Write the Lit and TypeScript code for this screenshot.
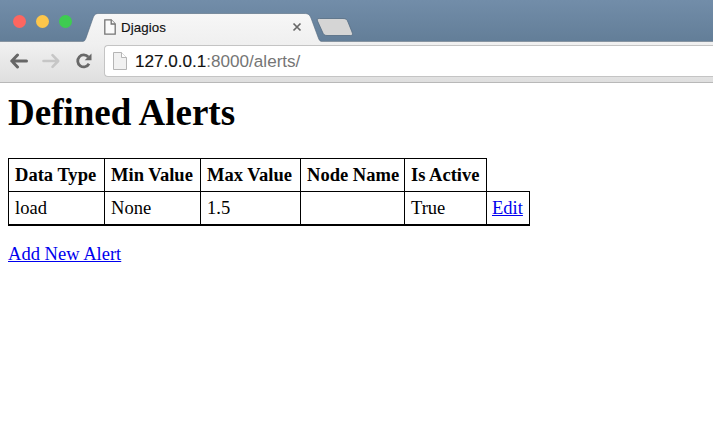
import { LitElement, html, css } from "lit";
import { customElement } from "lit/decorators.js";

@customElement("browser-chrome")
class BrowserChrome extends LitElement {
  static styles = css`
    :host { display: block; font-family: "Liberation Sans", Arial, sans-serif; }
    svg { display: block; flex: none; }
    .strip {
      height: 42px; box-sizing: border-box; display: flex; align-items: flex-start;
      padding-left: 13px; background: linear-gradient(#728da9, #637e98); border-bottom: 1px solid #8794a1;
    }
    .lights { display: flex; gap: 10px; margin-top: 15px; width: 69px; }
    .light { width: 13px; height: 13px; border-radius: 50%; }
    .red { background: #fd6660; }
    .yellow { background: #fdc64b; }
    .green { background: #3ecc51; }
    .tab { position: relative; width: 240px; height: 30px; margin-top: 12px; }
    .shape { position: absolute; inset: 0; }
    .label {
      position: relative; display: flex; align-items: center; height: 30px;
      padding-left: 22px; box-sizing: border-box;
    }
    .title { font-size: 13.3px; line-height: 16px; color: #111; margin-left: 5px; width: 170px; padding-top: 1px; letter-spacing: .1px; -webkit-text-stroke: 0.15px #111; }
    .newtab { margin: 17px 0 0 -6px; }
    .bar {
      height: 41px; box-sizing: border-box; display: flex; padding: 3px 0 0 9px;
      background: linear-gradient(#f1f1f1, #dfdfdf); border-bottom: 1px solid #b8b8b8;
    }
    .nav { margin: 8px 12px 0 0; }
    .reload { margin: 8px 11px 0 2px; }
    .omnibox {
      flex: 1; height: 32px; box-sizing: border-box; display: flex; align-items: center;
      background: #fff; border: 1px solid #c4c4c4; border-right: 0;
      border-radius: 4px 0 0 4px; padding-left: 7px;
    }
    .url { font-size: 17.1px; line-height: 20px; margin-left: 8px; padding-top: 2px; color: #757575; white-space: nowrap; }
    .host { color: #111; -webkit-text-stroke: 0.15px #111; }
  `;

  render() {
    return html`
      <div class="strip">
        <div class="lights">
          <span class="light red"></span><span class="light yellow"></span><span class="light green"></span>
        </div>
        <div class="tab">
          <svg class="shape" width="240" height="30" viewBox="0 0 240 30">
            <defs><linearGradient id="g" x2="0" y2="1"><stop stop-color="#f7f7f7"/><stop offset="1" stop-color="#f0f0f0"/></linearGradient></defs>
            <path d="M0 29.500C2.500 29.500 3 28.500 4 26L11 6C12.500 2.200 14 1.500 17 1.500H222C226 1.500 227.500 2.500 229 6L236 25C237 28 238 29.500 240 29.500V30H0Z" fill="url(#g)"/>
            <path d="M0 29.500C2.500 29.500 3 28.500 4 26L11 6C12.500 2.200 14 1.500 17 1.500H222C226 1.500 227.500 2.500 229 6L236 25C237 28 238 29.500 240 29.500" fill="none" stroke="#53697f" stroke-opacity=".6"/>
          </svg>
          <div class="label">
            <svg width="12" height="16" viewBox="0 0 12 16" fill="#fafafa" stroke="#747474" stroke-width="1.300">
              <path d="M.8.800H7.200L11.200 5V15.200H.8Z"/><path d="M7.200.800V5H11.200"/>
            </svg>
            <span class="title">Djagios</span>
            <svg width="12" height="12" viewBox="0 0 12 12" stroke="#686868" stroke-width="1.700"><path d="M2.500 2.500L9.500 9.500M9.500 2.500L2.500 9.500"/></svg>
          </div>
        </div>
        <svg class="newtab" width="38" height="20" viewBox="0 0 38 20">
          <path d="M3.500 1.500H27C30 1.500 31 2.500 32 5L36 15C37 17.500 36.500 18.500 34.500 18.500H11C8.500 18.500 7.500 17.500 6.500 15L1.500 4C.7 2.200 1.500 1.500 3.500 1.500Z" fill="#d5d5d5" stroke="#536a81" stroke-opacity=".8"/>
        </svg>
      </div>
      <div class="bar">
        <svg class="nav" width="20" height="16" viewBox="0 0 20 16" fill="none" stroke="#666" stroke-width="3" stroke-linecap="round" stroke-linejoin="round"><path d="M3 8H17.500M8.500 2L2.800 8L8.500 14"/></svg>
        <svg class="nav" width="20" height="16" viewBox="0 0 20 16" fill="none" stroke="#c6c6c6" stroke-width="2.600" stroke-linecap="round" stroke-linejoin="round"><path d="M2.500 8H17M11.500 2.200L17.200 8L11.500 13.800"/></svg>
        <svg class="reload" width="18" height="16" viewBox="0 0 18 16"><path d="M13.300 4A6 6 0 1 0 14 10.800" fill="none" stroke="#686868" stroke-width="2.800"/><path d="M16.500 .5V7.300H9.700Z" fill="#686868"/></svg>
        <div class="omnibox">
          <svg width="15" height="18" viewBox="0 0 15 18" fill="#f1f1f1" stroke="#b5b5b5"><path d="M1.500.500H9.500L14.500 5.500V17.500H1.500Z"/><path d="M9.500.500V5.500H14.500" fill="#fff"/></svg>
          <span class="url"><span class="host">127.0.0.1</span>:8000/alerts/</span>
        </div>
      </div>
    `;
  }
}

@customElement("app-root")
class AppRoot extends LitElement {
  static styles = css`
    :host {
      display: block; height: 427px; overflow: hidden; background: #fff; color: #000;
      font: 18.55px/21px "Liberation Serif", "Times New Roman", serif;
    }
    main { padding: 8px 8px 0; }
    h1 { margin: 0; font-size: 37px; line-height: 42px; padding-top: 1px; font-weight: bold; font-variant-ligatures: none; }
    table { margin-top: 24px; width: 522px; table-layout: fixed; border-collapse: collapse; }
    th, td { box-sizing: border-box; height: 33px; padding: 0 0 0 6px; border: 1px solid #000; text-align: left; white-space: nowrap; }
    th { padding-bottom: 2px; }
    tbody td { border-bottom-width: 2px; }
    .c0, .c1 { width: 96px; } .c2 { width: 100px; } .c3 { width: 104px; } .c4 { width: 82px; } .c5 { width: 43px; }
    tbody .edit { padding-left: 5px; }
    a { color: #0000ee; text-decoration: underline; }
    .add { margin: 17px 0 0; }
  `;

  private columns = ["Data Type", "Min Value", "Max Value", "Node Name", "Is Active"];
  private rows = [["load", "None", "1.5", "", "True"]];

  render() {
    return html`
      <browser-chrome></browser-chrome>
      <main>
        <h1>Defined Alerts</h1>
        <table>
          <colgroup><col class="c0"><col class="c1"><col class="c2"><col class="c3"><col class="c4"><col class="c5"></colgroup>
          <thead><tr>${this.columns.map((c) => html`<th>${c}</th>`)}</tr></thead>
          <tbody>${this.rows.map((r) => html`<tr>${r.map((v) => html`<td>${v}</td>`)}<td class="edit"><a href="#">Edit</a></td></tr>`)}</tbody>
        </table>
        <p class="add"><a href="#">Add New Alert</a></p>
      </main>
    `;
  }
}
